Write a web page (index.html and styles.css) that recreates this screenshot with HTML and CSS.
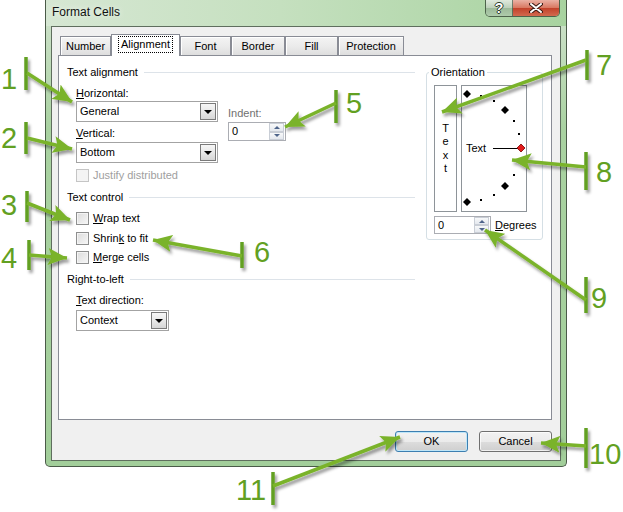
FILE: index.html
```html
<!DOCTYPE html>
<html lang="en">
<head>
    <meta charset="UTF-8">
    <title>Format Cells</title>
    <link rel="stylesheet" href="styles.css">
</head>
<body>
    <div class="window">
        <div class="titlebar">
            <span class="title">Format Cells</span>
            <div class="caption-btns">
                <span class="cap-btn help">?</span>
                <span class="cap-btn close">
                    <svg width="14" height="10" viewBox="0 0 14 10">
                        <path d="M2 1 L12 9 M12 1 L2 9" stroke="#3a1a14" stroke-width="4" stroke-linecap="round"/>
                        <path d="M2 1 L12 9 M12 1 L2 9" stroke="#fff" stroke-width="2" stroke-linecap="round"/>
                    </svg>
                </span>
            </div>
        </div>

        <div class="client">
            <div class="tabs">
                <span class="tab t-number">Number</span>
                <span class="tab active t-align"><span class="focus">Alignment</span></span>
                <span class="tab t-font">Font</span>
                <span class="tab t-border">Border</span>
                <span class="tab t-fill">Fill</span>
                <span class="tab t-prot">Protection</span>
            </div>

            <div class="panel">
                <div class="col-main">
                    <div class="sec-head">Text alignment</div>
                    <div class="sub align-row">
                        <div class="align-fields">
                            <div class="lbl lbl-first"><u>H</u>orizontal:</div>
                            <div class="select w-wide"><span class="select-val">General</span><span class="drop"></span></div>
                            <div class="lbl lbl-vert"><u>V</u>ertical:</div>
                            <div class="select w-wide sel-vert"><span class="select-val">Bottom</span><span class="drop"></span></div>
                        </div>
                        <div class="indent">
                            <div class="lbl lbl-dim">Indent:</div>
                            <div class="spin w-indent">
                                <span class="spin-val">0</span>
                                <span class="spin-btns"><span class="up"></span><span class="dn"></span></span>
                            </div>
                        </div>
                    </div>
                    <div class="sub check disabled row-justify"><span class="box"></span>Justify distributed</div>

                    <div class="sec-head head-control">Text control</div>
                    <div class="sub check row-wrap"><span class="box"></span><span><u>W</u>rap text</span></div>
                    <div class="sub check row-shrink"><span class="box"></span><span>Shrin<u>k</u> to fit</span></div>
                    <div class="sub check row-merge"><span class="box"></span><span><u>M</u>erge cells</span></div>

                    <div class="sec-head head-rtl">Right-to-left</div>
                    <div class="sub lbl lbl-dir"><u>T</u>ext direction:</div>
                    <div class="sub">
                        <div class="select w-narrow sel-dir"><span class="select-val">Context</span><span class="drop"></span></div>
                    </div>
                </div>

                <fieldset class="orient">
                    <legend>Orientation</legend>
                    <div class="orient-boxes">
                        <div class="vtext"><span>T</span><span>e</span><span>x</span><span>t</span></div>
                        <div class="dial">
                            <svg width="64" height="125" viewBox="0 0 64 125">
                                <g fill="#000">
                                    <polygon points="5,4 9,8 5,12 1,8"/>
                                    <polygon points="43,20 47,24 43,28 39,24"/>
                                    <polygon points="43,96 47,100 43,104 39,100"/>
                                    <polygon points="5,112 9,116 5,120 1,116"/>
                                    <rect x="18" y="9" width="2" height="2"/>
                                    <rect x="31" y="14" width="2" height="2"/>
                                    <rect x="51" y="34" width="2" height="2"/>
                                    <rect x="56" y="47" width="2" height="2"/>
                                    <rect x="51" y="88" width="2" height="2"/>
                                    <rect x="31" y="108" width="2" height="2"/>
                                    <rect x="18" y="113" width="2" height="2"/>
                                </g>
                                <line x1="31" y1="62.5" x2="56" y2="62.5" stroke="#000" stroke-width="1"/>
                                <polygon points="59,58 63,62 59,66 55,62" fill="#e21b1b" stroke="#7a0000" stroke-width="0.8"/>
                                <text x="4" y="66" class="dial-text">Text</text>
                            </svg>
                        </div>
                    </div>
                    <div class="deg-row">
                        <div class="spin w-deg">
                            <span class="spin-val">0</span>
                            <span class="spin-btns"><span class="up"></span><span class="dn"></span></span>
                        </div>
                        <span class="deg-lbl"><u>D</u>egrees</span>
                    </div>
                </fieldset>
            </div>

            <div class="buttons">
                <span class="btn btn-default">OK</span>
                <span class="btn">Cancel</span>
            </div>
        </div>
    </div>

    <!-- callouts laid over the screenshot -->
    <svg class="notes" width="623" height="512" viewBox="0 0 623 512">
        <defs>
            <marker id="head" markerUnits="userSpaceOnUse" markerWidth="20" markerHeight="17" refX="19" refY="8.5" orient="auto">
                <path d="M0 0 L19 8.5 L0 17 L4 8.5 z" fill="#7ab32b"/>
            </marker>
            <filter id="sh" x="-30%" y="-30%" width="160%" height="160%">
                <feDropShadow dx="2" dy="3" stdDeviation="1.6" flood-color="#000" flood-opacity="0.4"/>
            </filter>
        </defs>
        <g filter="url(#sh)">
            <g class="bars">
                <line x1="26" y1="57" x2="26" y2="90"/>
                <line x1="26" y1="122" x2="26" y2="154"/>
                <line x1="27" y1="191" x2="27" y2="222"/>
                <line x1="29" y1="240" x2="29" y2="270"/>
                <line x1="336" y1="90" x2="336" y2="123"/>
                <line x1="242" y1="242" x2="242" y2="268"/>
                <line x1="587" y1="50" x2="587" y2="80"/>
                <line x1="586" y1="152" x2="586" y2="190"/>
                <line x1="586" y1="277" x2="586" y2="313"/>
                <line x1="586" y1="428" x2="586" y2="468"/>
                <line x1="273" y1="472" x2="273" y2="505"/>
            </g>
            <g class="arrows">
                <line x1="27" y1="73" x2="72" y2="102"/>
                <line x1="27" y1="138" x2="72" y2="149"/>
                <line x1="27" y1="203" x2="70" y2="220"/>
                <line x1="29" y1="255" x2="67" y2="258"/>
                <line x1="336" y1="103" x2="285" y2="127"/>
                <line x1="242" y1="256" x2="153" y2="240"/>
                <line x1="586" y1="60" x2="442" y2="112"/>
                <line x1="586" y1="167" x2="512" y2="160"/>
                <line x1="586" y1="300" x2="485" y2="230"/>
                <line x1="586" y1="446" x2="541" y2="443"/>
                <line x1="273" y1="486" x2="400" y2="437"/>
            </g>
        </g>
        <g class="nums">
            <text x="1" y="89">1</text>
            <text x="1" y="148">2</text>
            <text x="1" y="215">3</text>
            <text x="1" y="268">4</text>
            <text x="346" y="113">5</text>
            <text x="254" y="262">6</text>
            <text x="596" y="75">7</text>
            <text x="596" y="182">8</text>
            <text x="591" y="308">9</text>
            <text x="589" y="464">10</text>
            <text x="236" y="500">11</text>
        </g>
    </svg>
</body>
</html>
```

FILE: styles.css
```css
* {
    box-sizing: border-box;
}

body {
    margin: 0;
    width: 623px;
    height: 512px;
    position: relative;
    overflow: hidden;
    background: #fff;
    font-family: "Liberation Sans", Arial, sans-serif;
    font-size: 11px;
    color: #000;
}

u {
    text-decoration: underline;
    text-underline-offset: 1px;
}

/* window frame */
.window {
    position: absolute;
    left: 45px;
    top: 0;
    width: 522px;
    height: 467px;
    padding: 0 5px 5px;
    border: 1px solid #4a5a48;
    border-top: none;
    border-radius: 0 0 5px 5px;
    background: linear-gradient(180deg, #d2e3cf 0, #a9d2a1 130px, #a2ce9a 100%);
}

.titlebar {
    display: flex;
    justify-content: space-between;
    align-items: flex-start;
    height: 26px;
    margin: 0 -5px;
    padding: 0 6px;
    background: linear-gradient(90deg, #d6e7d3 0%, #c5e0bf 45%, #a8d3a0 100%);
}

.title {
    font-size: 12px;
    line-height: 24px;
    color: #111;
    text-shadow: 0 0 6px rgba(255, 255, 255, 0.9);
}

.caption-btns {
    display: flex;
    height: 17px;
    border: 1px solid rgba(45, 60, 45, 0.75);
    border-top: none;
    border-radius: 0 0 5px 5px;
    overflow: hidden;
}

.cap-btn {
    display: flex;
    align-items: center;
    justify-content: center;
}

.help {
    width: 27px;
    border-right: 1px solid rgba(45, 60, 45, 0.6);
    background: linear-gradient(180deg, #dfe9dd 0%, #bccfb9 50%, #9cb999 51%, #aecbab 100%);
    color: #fff;
    font-weight: bold;
    font-size: 14px;
    line-height: 16px;
    text-shadow: 1px 0 0 #2b3b2b, -1px 0 0 #2b3b2b, 0 1px 0 #2b3b2b, 0 -1px 0 #2b3b2b;
}

.close {
    width: 46px;
    background: linear-gradient(180deg, #eab1a4 0%, #d8765f 50%, #c2412a 51%, #d26a4f 100%);
}

/* dialog client */
.client {
    width: 510px;
    height: 435px;
    padding: 7px 8px 0 6px;
    border: 1px solid #5f6e5e;
    background: #f0f0f0;
}

.tabs {
    display: flex;
    align-items: flex-end;
    height: 22px;
    padding-left: 2px;
    margin-bottom: -1px;
    position: relative;
    z-index: 1;
}

.tab {
    display: flex;
    align-items: center;
    justify-content: center;
    height: 19px;
    margin-bottom: 1px;
    border: 1px solid #898c95;
    border-bottom: none;
    background: linear-gradient(180deg, #f4f4f4 0%, #ebebeb 50%, #dedede 100%);
    box-shadow: inset 1px 1px 0 #fff;
}

.tab.active {
    height: 22px;
    margin-bottom: 0;
    background: #fff;
    box-shadow: none;
    padding-bottom: 2px;
}

.focus {
    height: 17px;
    line-height: 15px;
    padding: 0 2px;
    border: 1px dotted #000;
}

.t-number { width: 51px; }
.t-align { width: 69px; }
.t-font { width: 51px; }
.t-border { width: 54px; }
.t-fill { width: 53px; }
.t-prot { width: 66px; }

.panel {
    display: flex;
    gap: 11px;
    height: 365px;
    padding: 9px 0 0 8px;
    border: 1px solid #898c95;
    background: #fff;
}

.col-main {
    width: 348px;
}

.sec-head {
    display: flex;
    align-items: center;
    height: 15px;
    line-height: 15px;
}

.sec-head::after {
    content: '';
    flex: 1;
    margin-left: 6px;
    border-top: 1px solid #dde3e9;
}

.head-control { margin-top: 8px; }
.head-rtl { margin-top: 8px; }

.sub {
    padding-left: 9px;
}

.lbl {
    line-height: 16px;
}

.lbl-dim {
    color: #707070;
}

.align-row {
    display: flex;
}

.lbl-first { margin-top: 5px; }
.lbl-vert { margin-top: 3px; }
.sel-vert { margin-top: 1px; }

.indent {
    margin-left: 10px;
    padding-top: 25px;
}

.indent .spin {
    margin-top: 1px;
}

/* combo boxes */
.select {
    display: flex;
    height: 21px;
    border: 1px solid #a3a3a3;
    background: #fff;
}

.select-val {
    flex: 1;
    line-height: 19px;
    padding-left: 3px;
}

.drop {
    width: 16px;
    margin: 1px;
    border: 1px solid #7a7a7a;
    background: linear-gradient(180deg, #f6f6f6 0%, #e8e8e8 50%, #d6d6d6 100%);
    display: flex;
    align-items: center;
    justify-content: center;
}

.drop::after {
    content: '';
    border-left: 4px solid transparent;
    border-right: 4px solid transparent;
    border-top: 4px solid #000;
}

.w-wide { width: 142px; }
.w-narrow { width: 93px; }
.sel-dir { margin-top: 2px; }

/* spinners */
.spin {
    display: flex;
    border: 1px solid #abadb3;
    background: #fff;
}

.w-indent { width: 58px; height: 19px; }
.w-deg { width: 57px; height: 18px; }

.spin-val {
    flex: 1;
    padding-left: 3px;
    line-height: 17px;
}

.spin-btns {
    display: flex;
    flex-direction: column;
    width: 15px;
    margin: 0 1px 0 0;
}

.spin-btns span {
    flex: 1;
    display: flex;
    align-items: center;
    justify-content: center;
    border: 1px solid #c9ced6;
    background: linear-gradient(180deg, #f8f9fa 0%, #e4e8ee 100%);
}

.spin-btns .up::after {
    content: '';
    border-left: 3px solid transparent;
    border-right: 3px solid transparent;
    border-bottom: 3px solid #4e648a;
}

.spin-btns .dn::after {
    content: '';
    border-left: 3px solid transparent;
    border-right: 3px solid transparent;
    border-top: 3px solid #4e648a;
}

/* check boxes */
.check {
    display: flex;
    align-items: center;
    gap: 4px;
    height: 13px;
    line-height: 13px;
}

.box {
    width: 13px;
    height: 13px;
    border: 1px solid #8e8f8f;
    background: linear-gradient(135deg, #dcdcdc 0%, #f6f6f6 100%);
    box-shadow: inset 0 0 0 1px #f4f4f4;
}

.disabled {
    color: #a0a0a0;
}

.disabled .box {
    border-color: #c5c5c5;
    background: #f4f4f4;
}

.row-justify { margin-top: 6px; }
.row-wrap { margin-top: 7px; }
.row-shrink { margin-top: 7px; }
.row-merge { margin-top: 6px; }
.lbl-dir { margin-top: 5px; }

/* orientation group */
.orient {
    width: 117px;
    height: 175px;
    margin: 0;
    padding: 5px 0 4px 7px;
    border: 1px solid #d5dfe5;
    border-radius: 3px;
}

.orient legend {
    margin-left: -5px;
    padding: 0 2px;
    line-height: 15px;
}

.orient-boxes {
    display: flex;
    gap: 4px;
}

.vtext {
    width: 23px;
    height: 127px;
    border: 1px solid #8e9499;
    display: flex;
    flex-direction: column;
    align-items: center;
    justify-content: center;
    line-height: 13.5px;
}

.dial {
    width: 66px;
    height: 127px;
    border: 1px solid #8e9499;
}

.dial svg {
    display: block;
}

.dial-text {
    font-family: "Liberation Sans", Arial, sans-serif;
    font-size: 11px;
}

.deg-row {
    display: flex;
    align-items: center;
    gap: 4px;
    margin-top: 4px;
}

/* bottom buttons */
.buttons {
    display: flex;
    justify-content: flex-end;
    gap: 11px;
    margin-top: 11px;
}

.btn {
    width: 73px;
    height: 21px;
    line-height: 19px;
    text-align: center;
    border: 1px solid #707070;
    border-radius: 3px;
    background: linear-gradient(180deg, #f2f2f2 0%, #ebebeb 50%, #dddddd 51%, #cfcfcf 100%);
    box-shadow: inset 0 0 0 1px rgba(255, 255, 255, 0.7);
}

.btn-default {
    border-color: #3c7fb1;
    box-shadow: inset 0 0 0 1px #bfe6f8;
}

/* callouts */
.notes {
    position: absolute;
    left: 0;
    top: 0;
    pointer-events: none;
}

.bars line {
    stroke: #62a022;
    stroke-width: 3.5;
}

.arrows line {
    stroke: #7ab32b;
    stroke-width: 3.5;
    marker-end: url(#head);
}

.nums text {
    font-family: "Liberation Sans", Arial, sans-serif;
    font-size: 29px;
    fill: #62a022;
}
```
